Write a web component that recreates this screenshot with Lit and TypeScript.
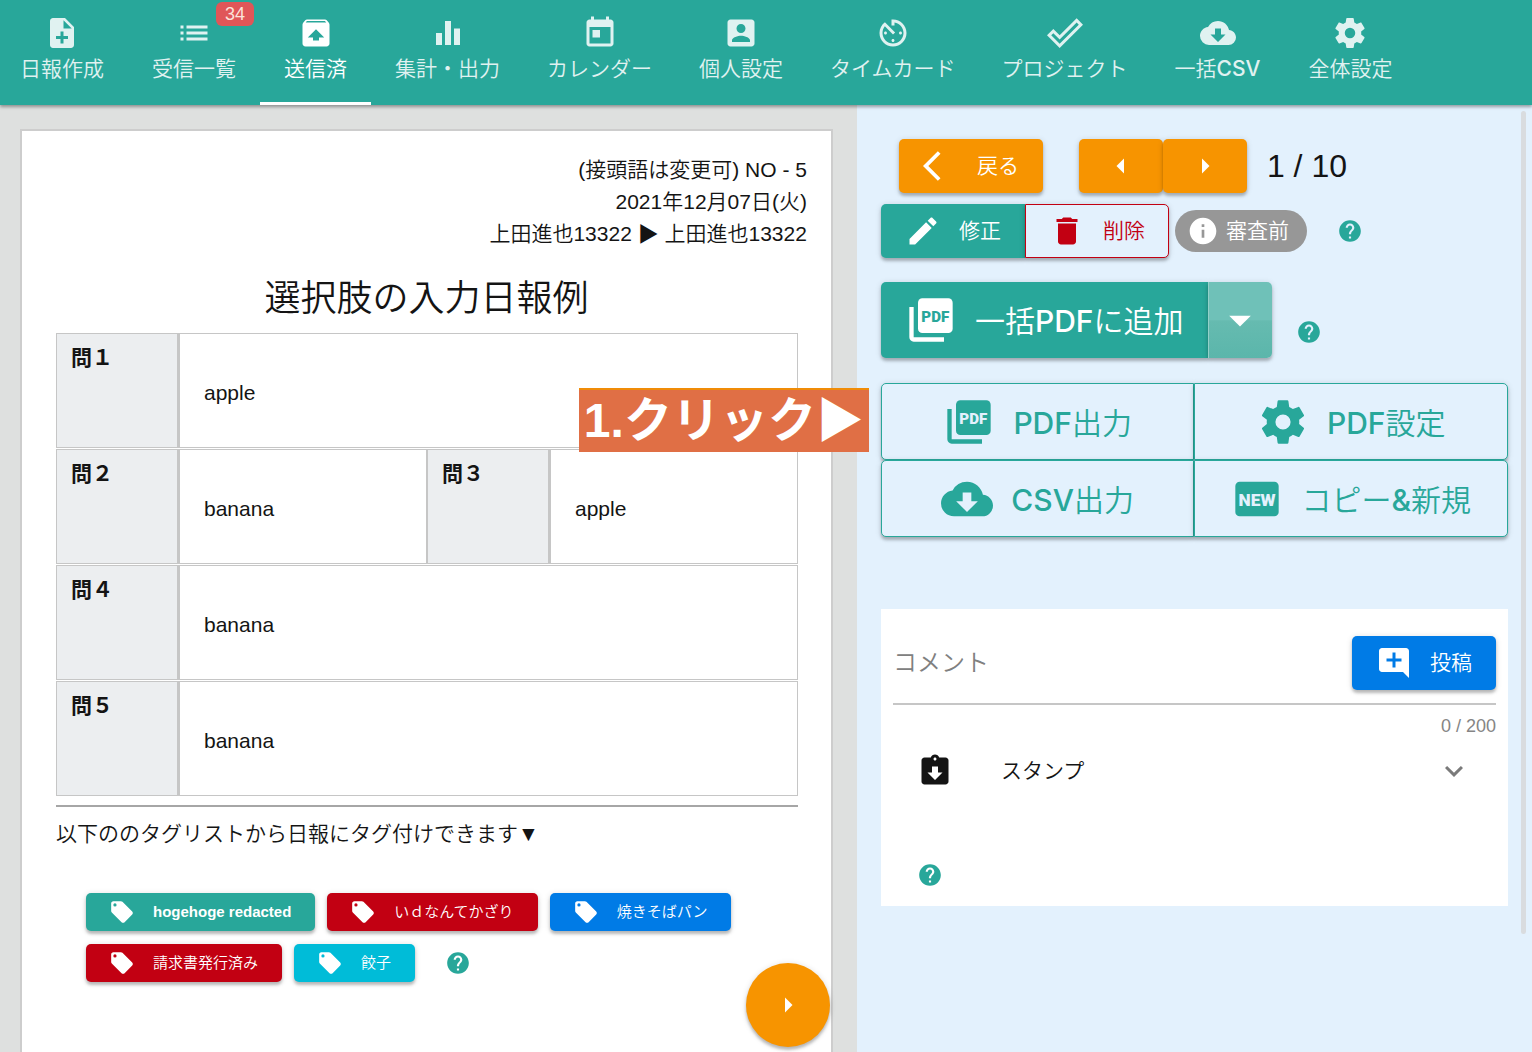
import { LitElement, html, css, svg } from "lit";
import { customElement, property, state } from "lit/decorators.js";
import { classMap } from "lit/directives/class-map.js";

const PATHS: Record<string, string> = {
  noteAdd:
    "M14 2H6c-1.1 0-2 .9-2 2v16c0 1.1.89 2 1.99 2H18c1.1 0 2-.9 2-2V8l-6-6zm2 14h-3v3h-2v-3H8v-2h3v-3h2v3h3v2zm-3-7V3.5L18.5 9H13z",
  list: "M3 13h2v-2H3v2zm0 4h2v-2H3v2zm0-8h2V7H3v2zm4 4h14v-2H7v2zm0 4h14v-2H7v2zM7 7v2h14V7H7z",
  sent: "M20.55 5.22l-1.39-1.68C18.88 3.21 18.47 3 18 3H6c-.47 0-.88.21-1.15.55L3.46 5.22C3.17 5.57 3 6.01 3 6.5V19c0 1.1.89 2 2 2h14c1.1 0 2-.9 2-2V6.5c0-.49-.17-.93-.45-1.28zM12 9.5l5.5 5.5H14v2h-4v-2H6.5L12 9.5zM5.12 5l.82-1h12l.93 1H5.12z",
  chart: "M10 20h4V4h-4v16zm-6 0h4v-8H4v8zM16 9v11h4V9h-4z",
  calendar:
    "M19 3h-1V1h-2v2H8V1H6v2H5c-1.11 0-1.99.9-1.99 2L3 19c0 1.1.89 2 2 2h14c1.1 0 2-.9 2-2V5c0-1.1-.9-2-2-2zm0 16H5V8h14v11zM7 10h5v5H7z",
  account:
    "M3 5v14c0 1.1.89 2 2 2h14c1.1 0 2-.9 2-2V5c0-1.1-.9-2-2-2H5c-1.11 0-2 .9-2 2zm12 4c0 1.66-1.34 3-3 3s-3-1.34-3-3 1.34-3 3-3 3 1.34 3 3zm-9 8c0-2 4-3.1 6-3.1s6 1.1 6 3.1v1H6v-1z",
  timer:
    "M11 17c0 .55.45 1 1 1s1-.45 1-1-.45-1-1-1-1 .45-1 1zm0-14v4h2V5.08c3.39.49 6 3.39 6 6.92 0 3.87-3.13 7-7 7s-7-3.13-7-7c0-1.68.59-3.22 1.58-4.42L12 13l1.41-1.41-6.8-6.8v.02C4.42 6.45 3 9.05 3 12c0 4.97 4.02 9 9 9 4.97 0 9-4.03 9-9s-4.03-9-9-9h-1zm7 9c0-.55-.45-1-1-1s-1 .45-1 1 .45 1 1 1 1-.45 1-1zM6 12c0 .55.45 1 1 1s1-.45 1-1-.45-1-1-1-1 .45-1 1z",
  check:
    "M19.78 2.2L24 6.42L8.44 22L0 13.55L4.22 9.33L8.44 13.55L19.78 2.2M19.78 5L8.44 16.36L4.22 12.19L2.81 13.55L8.44 19.17L21.19 6.42L19.78 5Z",
  cloud:
    "M17 13L12 18L7 13H10V9H14V13M19.35 10.03C18.67 6.59 15.64 4 12 4A7.5 7.5 0 0 0 5.35 8.04C2.34 8.36 0 10.91 0 14A6 6 0 0 0 6 20H19A5 5 0 0 0 24 15C24 12.36 21.95 10.22 19.35 10.03Z",
  cog: "M12 15.5A3.5 3.5 0 0 1 8.5 12A3.5 3.5 0 0 1 12 8.5A3.5 3.5 0 0 1 15.5 12A3.5 3.5 0 0 1 12 15.5M19.43 12.97C19.47 12.65 19.5 12.33 19.5 12C19.5 11.67 19.47 11.34 19.43 11L21.54 9.37C21.73 9.22 21.78 8.95 21.66 8.73L19.66 5.27C19.54 5.05 19.27 4.96 19.05 5.05L16.56 6.05C16.04 5.66 15.5 5.32 14.87 5.07L14.5 2.42C14.46 2.18 14.25 2 14 2H10C9.75 2 9.54 2.18 9.5 2.42L9.13 5.07C8.5 5.32 7.96 5.66 7.44 6.05L4.95 5.05C4.73 4.96 4.46 5.05 4.34 5.27L2.34 8.73C2.21 8.95 2.27 9.22 2.46 9.37L4.57 11C4.53 11.34 4.5 11.67 4.5 12C4.5 12.33 4.53 12.65 4.57 12.97L2.46 14.63C2.27 14.78 2.21 15.05 2.34 15.27L4.34 18.73C4.46 18.95 4.73 19.03 4.95 18.95L7.44 17.94C7.96 18.34 8.5 18.68 9.13 18.93L9.5 21.58C9.54 21.82 9.75 22 10 22H14C14.25 22 14.46 21.82 14.5 21.58L14.87 18.93C15.5 18.67 16.04 18.34 16.56 17.94L19.05 18.95C19.27 19.03 19.54 18.95 19.66 18.73L21.66 15.27C21.78 15.05 21.73 14.78 21.54 14.63L19.43 12.97Z",
  back: "M11.67 3.87L9.9 2.1 0 12l9.9 9.9 1.77-1.77L3.54 12z",
  left: "M14 7l-5 5 5 5V7z",
  right: "M10 17l5-5-5-5v10z",
  down: "M7 10l5 5 5-5z",
  expand: "M16.59 8.59L12 13.17 7.41 8.59 6 10l6 6 6-6z",
  edit: "M3 17.25V21h3.75L17.81 9.94l-3.75-3.75L3 17.25zM20.71 7.04c.39-.39.39-1.02 0-1.41l-2.34-2.34c-.39-.39-1.02-.39-1.41 0l-1.83 1.83 3.75 3.75 1.83-1.83z",
  trash: "M6 19c0 1.1.9 2 2 2h8c1.1 0 2-.9 2-2V7H6v12zM19 4h-3.5l-1-1h-5l-1 1H5v2h14V4z",
  info: "M12 2C6.48 2 2 6.48 2 12s4.48 10 10 10 10-4.48 10-10S17.52 2 12 2zm1 15h-2v-6h2v6zm0-8h-2V7h2v2z",
  help: "M12 2C6.48 2 2 6.48 2 12s4.48 10 10 10 10-4.48 10-10S17.52 2 12 2zm1 17h-2v-2h2v2zm2.07-7.75l-.9.92C13.45 12.9 13 13.5 13 15h-2v-.5c0-1.1.45-2.1 1.17-2.83l1.24-1.26c.37-.36.59-.86.59-1.41 0-1.1-.9-2-2-2s-2 .9-2 2H8c0-2.21 1.79-4 4-4s4 1.79 4 4c0 .88-.36 1.68-.93 2.25z",
  comment:
    "M21.99 4c0-1.1-.89-2-1.99-2H4c-1.1 0-2 .9-2 2v12c0 1.1.9 2 2 2h14l4 4-.01-18zM17 11h-4v4h-2v-4H7V9h4V5h2v4h4v2z",
  stamp:
    "M19 3h-4.18C14.4 1.84 13.3 1 12 1c-1.3 0-2.4.84-2.82 2H5c-1.1 0-2 .9-2 2v14c0 1.1.9 2 2 2h14c1.1 0 2-.9 2-2V5c0-1.1-.9-2-2-2zm-7 0c.55 0 1 .45 1 1s-.45 1-1 1-1-.45-1-1 .45-1 1-1zm0 15l-5-5h3V9h4v4h3l-5 5z",
  tag: "M5.5 7A1.5 1.5 0 0 1 4 5.5A1.5 1.5 0 0 1 5.5 4A1.5 1.5 0 0 1 7 5.5A1.5 1.5 0 0 1 5.5 7M21.41 11.58L12.41 2.58C12.05 2.22 11.55 2 11 2H4C2.89 2 2 2.89 2 4V11C2 11.55 2.22 12.05 2.59 12.41L11.58 21.41C11.95 21.77 12.45 22 13 22C13.55 22 14.05 21.77 14.41 21.41L21.41 14.41C21.78 14.05 22 13.55 22 13C22 12.44 21.77 11.94 21.41 11.58Z",
};

@customElement("ui-icon")
class UiIcon extends LitElement {
  @property() name = "";

  static styles = css`
    :host {
      display: block;
      flex: none;
      width: 36px;
      height: 36px;
    }
    .glyph {
      display: block;
      width: 100%;
      height: 100%;
      fill: currentColor;
    }
    .word {
      fill: var(--cut, #fff);
      font-family: Roboto, sans-serif;
      font-weight: 900;
      text-anchor: middle;
    }
    .narrow {
      font-size: 7px;
    }
    .wide {
      font-size: 8px;
    }
  `;

  private shape() {
    if (this.name === "pdf") {
      return svg`
        <path d="M4 6H2v14c0 1.1.9 2 2 2h14v-2H4z" />
        <rect x="6" y="2" width="16" height="16" rx="2" />
        <text class="word narrow" x="14" y="13">PDF</text>`;
    }
    if (this.name === "new") {
      return svg`
        <rect x="2" y="4" width="20" height="16" rx="2" />
        <text class="word wide" x="12" y="15">NEW</text>`;
    }
    return svg`<path fill-rule="evenodd" d=${PATHS[this.name] ?? ""} />`;
  }

  render() {
    return html`<svg class="glyph" viewBox="0 0 24 24" aria-hidden="true">${this.shape()}</svg>`;
  }
}

interface Tab {
  icon: string;
  label: string;
  kana?: boolean;
  active?: boolean;
  badge?: number;
}

interface Tag {
  label: string;
  tone: string;
  latin?: boolean;
}

const TABS: Tab[] = [
  { icon: "noteAdd", label: "日報作成" },
  { icon: "list", label: "受信一覧", badge: 34 },
  { icon: "sent", label: "送信済", active: true },
  { icon: "chart", label: "集計・出力" },
  { icon: "calendar", label: "カレンダー", kana: true },
  { icon: "account", label: "個人設定" },
  { icon: "timer", label: "タイムカード", kana: true },
  { icon: "check", label: "プロジェクト", kana: true },
  { icon: "cloud", label: "一括CSV" },
  { icon: "cog", label: "全体設定" },
];

const TAGS: Tag[] = [
  { label: "hogehoge redacted", tone: "teal", latin: true },
  { label: "いｄなんてかざり", tone: "red" },
  { label: "焼きそばパン", tone: "blue" },
  { label: "請求書発行済み", tone: "red" },
  { label: "餃子", tone: "cyan" },
];

const EXPORTS = [
  { icon: "pdf", label: "PDF出力" },
  { icon: "cog", label: "PDF設定" },
  { icon: "cloud", label: "CSV出力" },
  { icon: "new", label: "コピー&新規" },
];

@customElement("app-root")
class AppRoot extends LitElement {
  @state() private comment = "";
  @state() private stampOpen = false;

  static styles = css`
    :host {
      --teal: #28a79a;
      --orange: #f79400;
      --red: #c20012;
      --blue: #007be6;
      --cyan: #00bcd8;
      --sky: #e3f1fd;
      --lift: 0 3px 3px rgba(0, 0, 0, 0.22), 0 1px 6px rgba(0, 0, 0, 0.14);
      --medium: Inter, "Noto Sans CJK JP DemiLight", "Noto Sans CJK JP Light", "Noto Sans CJK JP", sans-serif;
      display: flex;
      flex-direction: column;
      height: 100vh;
      overflow: hidden;
      font-family: "Liberation Sans", "Noto Sans CJK JP DemiLight", "Noto Sans CJK JP Light", "Noto Sans CJK JP",
        sans-serif;
      font-size: 21px;
      line-height: 32px;
      color: #141414;
    }
    * {
      box-sizing: border-box;
    }
    button,
    input {
      font: inherit;
      color: inherit;
      border: 0;
      margin: 0;
      padding: 0;
      background: none;
    }
    button {
      cursor: pointer;
    }

    .bar {
      position: relative;
      z-index: 2;
      display: flex;
      flex: none;
      height: 105px;
      background: var(--teal);
      box-shadow: 0 2px 3px rgba(0, 0, 0, 0.35);
    }
    .tabs {
      display: flex;
      margin-left: -4px;
    }
    .tab {
      position: relative;
      display: flex;
      flex-direction: column;
      align-items: center;
      gap: 2px;
      padding: 15px 24px 0;
      white-space: nowrap;
      text-decoration: none;
      color: #e0f2f1;
      font-family: var(--medium);
      font-weight: 500;
    }
    .kana {
      padding-left: 23px;
      padding-right: 23px;
    }
    .active {
      color: #fff;
      box-shadow: inset 0 -3px #fff;
    }
    .badge {
      position: absolute;
      top: 2px;
      right: 6px;
      padding: 0 9px;
      border-radius: 6px;
      background: #e05658;
      color: #fbe3da;
      font-family: "Liberation Sans", sans-serif;
      font-size: 18px;
      font-weight: 400;
      line-height: 24px;
    }

    .body {
      display: flex;
      flex: 1;
      min-height: 0;
    }
    .left {
      position: relative;
      flex: 0 0 calc(56% - 1px);
      display: flex;
      padding: 24px 24px 0 20px;
      background: #dee0df;
    }
    .paper {
      flex: 1;
      border: 2px solid #cdcdcd;
      border-bottom: 0;
      background: #fff;
      padding: 23px 24px 0 34px;
    }
    .meta {
      margin: 0;
      text-align: right;
    }
    .title {
      margin: 25px 10px 9px 0;
      font-size: 36px;
      font-weight: 400;
      line-height: 48px;
      text-align: center;
    }
    .sheet {
      margin-right: 9px;
    }
    .answers {
      width: 100%;
      table-layout: fixed;
      border-collapse: separate;
      border-spacing: 0 1px;
    }
    .question,
    .answer {
      height: 115px;
      border: 1px solid #c6c6c6;
      text-align: left;
    }
    .question {
      width: 123px;
      padding: 8px 14px;
      border-right-width: 2px;
      background: #eceef0;
      font-family: "Liberation Sans", "Noto Sans CJK JP", sans-serif;
      font-weight: 700;
      vertical-align: top;
    }
    .answer {
      padding: 4px 24px 0;
      vertical-align: middle;
    }
    .rule {
      height: 2px;
      margin: 8px 0 11px;
      border: 0;
      background: #a6a6a6;
    }
    .hint {
      margin: 0;
    }
    .tags {
      display: flex;
      flex-wrap: wrap;
      gap: 13px 12px;
      margin: 43px 30px 0;
    }
    .tag {
      display: flex;
      align-items: center;
      gap: 18px;
      height: 38px;
      padding: 0 24px 0 23px;
      border-radius: 5px;
      color: #fff;
      font-size: 15px;
      box-shadow: var(--lift);
    }
    .latin {
      font-weight: 700;
    }
    .small {
      width: 26px;
      height: 26px;
    }
    .teal {
      background: var(--teal);
    }
    .red {
      background: var(--red);
    }
    .blue {
      background: var(--blue);
    }
    .cyan {
      background: var(--cyan);
    }
    .help {
      display: block;
      color: var(--teal);
    }
    .tags .help {
      align-self: center;
      margin-left: 18px;
    }
    .fab {
      position: absolute;
      right: 27px;
      bottom: 5px;
      display: grid;
      place-items: center;
      width: 84px;
      height: 84px;
      border-radius: 50%;
      background: var(--orange);
      color: #fff;
      box-shadow: var(--lift);
    }
    .callout {
      position: absolute;
      z-index: 1;
      top: 283px;
      right: -12px;
      padding: 0 5px;
      border-top: 2px solid #f08c08;
      background: #e06f45;
      color: #fff;
      font-family: "Liberation Sans", "Noto Sans CJK JP", sans-serif;
      font-size: 48px;
      font-weight: 700;
      line-height: 62px;
      white-space: nowrap;
    }

    .right {
      position: relative;
      flex: 1;
      min-width: 0;
      padding: 34px 24px 0;
      background: var(--sky);
    }
    .scroll {
      position: absolute;
      top: 6px;
      right: 6px;
      bottom: 118px;
      width: 5px;
      border-radius: 3px;
      background: #d9dcdf;
    }
    .row {
      display: flex;
      align-items: center;
    }
    .btn {
      display: flex;
      flex: none;
      align-items: center;
      justify-content: center;
      gap: 18px;
      height: 54px;
      padding: 0 24px;
      border-radius: 5px;
      color: #fff;
      font-family: var(--medium);
      font-weight: 500;
      white-space: nowrap;
      box-shadow: var(--lift);
    }
    .orange {
      background: var(--orange);
    }
    .pager {
      display: flex;
      margin: 0 20px 0 36px;
    }
    .first {
      margin-left: 18px;
    }
    .count {
      font-size: 32px;
    }
    .actions {
      margin-top: 11px;
    }
    .edit {
      border-radius: 5px 0 0 5px;
    }
    .remove {
      border: 1px solid var(--red);
      padding: 0 23px;
      border-radius: 0 5px 5px 0;
      background: var(--sky);
      color: var(--red);
    }
    .chip {
      display: flex;
      align-items: center;
      gap: 7px;
      height: 42px;
      margin-left: 6px;
      padding: 0 18px 0 12px;
      border-radius: 21px;
      background: #979797;
      color: #fff;
    }
    .chip ui-icon {
      width: 32px;
      height: 32px;
    }
    .actions .help {
      margin-left: 30px;
    }
    .bulk {
      margin-top: 24px;
    }
    .large {
      height: 76px;
      font-size: 30px;
    }
    .large ui-icon {
      width: 52px;
      height: 52px;
    }
    .caption {
      padding-top: 2px;
    }
    .bulk .large {
      --cut: var(--teal);
      border-radius: 5px 0 0 5px;
    }
    .bulk .more {
      padding: 0 6px 0 5px;
      border-left: 1px solid #93d0c9;
      border-radius: 0 5px 5px 0;
      background: linear-gradient(#6fc1b8 50%, #66bbb0 51%, #5bb6ab);
    }
    .bulk .help {
      align-self: flex-end;
      margin: 0 0 13px 24px;
    }
    .exports {
      display: grid;
      grid-template-columns: 1fr 1fr;
      margin-top: 25px;
    }
    .export {
      --cut: var(--sky);
      height: 77px;
      border: 1px solid var(--teal);
      background: var(--sky);
      color: var(--teal);
    }
    .export:nth-child(odd) {
      border-radius: 5px 0 0 5px;
    }
    .export:nth-child(even) {
      border-radius: 0 5px 5px 0;
    }
    .card {
      margin-top: 72px;
      padding: 27px 12px 18px;
      background: #fff;
    }
    .field {
      display: flex;
      padding-bottom: 13px;
      border-bottom: 2px solid #c6c6c6;
    }
    .input {
      flex: 1;
      min-width: 0;
      outline: 0;
      font-size: 24px;
    }
    .input::placeholder {
      color: #808080;
      opacity: 1;
    }
    .counter {
      margin: 9px 0 0;
      color: #858585;
      font-size: 18px;
      line-height: 24px;
      text-align: right;
    }
    .stamp {
      display: flex;
      align-items: center;
      width: 100%;
      height: 66px;
      padding: 0 24px;
      text-align: left;
    }
    .stamp-label {
      flex: 1;
      padding-left: 48px;
    }
    .chevron {
      color: #7a7a7a;
    }
    .open {
      rotate: 180deg;
    }
    .card .help {
      margin: 58px 0 0 24px;
    }
  `;

  private help() {
    return html`<button class="help small" aria-label="ヘルプ"><ui-icon class="small" name="help"></ui-icon></button>`;
  }

  private question(label: string, answer: string, span = 3) {
    return html`<th class="question" scope="row">${label}</th>
      <td class="answer" colspan=${span}>${answer}</td>`;
  }

  render() {
    return html`
      <header class="bar">
        <nav class="tabs">
          ${TABS.map(
            (t) => html`<a
              class=${classMap({ tab: true, kana: !!t.kana, active: !!t.active })}
              href="#"
              ><ui-icon name=${t.icon}></ui-icon><span>${t.label}</span>${t.badge
                ? html`<span class="badge">${t.badge}</span>`
                : ""}</a
            >`
          )}
        </nav>
      </header>
      <div class="body">
        <main class="left">
          <article class="paper">
            <p class="meta">(接頭語は変更可) NO - 5</p>
            <p class="meta">2021年12月07日(火)</p>
            <p class="meta">上田進也13322 ▶ 上田進也13322</p>
            <h1 class="title">選択肢の入力日報例</h1>
            <div class="sheet">
              <table class="answers">
                <colgroup>
                  <col width="123" />
                  <col />
                  <col width="123" />
                  <col />
                </colgroup>
                <tbody>
                  <tr>${this.question("問１", "apple")}</tr>
                  <tr>${this.question("問２", "banana", 1)}${this.question("問３", "apple", 1)}</tr>
                  <tr>${this.question("問４", "banana")}</tr>
                  <tr>${this.question("問５", "banana")}</tr>
                </tbody>
              </table>
              <hr class="rule" />
              <p class="hint">以下ののタグリストから日報にタグ付けできます▼</p>
              <div class="tags">
                ${TAGS.map(
                  (t) => html`<button class=${classMap({ tag: true, [t.tone]: true, latin: !!t.latin })}>
                    <ui-icon class="small" name="tag"></ui-icon>${t.label}
                  </button>`
                )}
                ${this.help()}
              </div>
            </div>
          </article>
          <div class="callout">1.クリック▶</div>
          <button class="fab" aria-label="次へ"><ui-icon name="right"></ui-icon></button>
        </main>
        <aside class="right">
          <div class="row">
            <button class="btn orange first"><ui-icon name="back"></ui-icon>戻る</button>
            <div class="pager">
              <button class="btn orange" aria-label="前へ"><ui-icon name="left"></ui-icon></button>
              <button class="btn orange" aria-label="次へ"><ui-icon name="right"></ui-icon></button>
            </div>
            <span class="count">1 / 10</span>
          </div>
          <div class="row actions">
            <button class="btn teal edit"><ui-icon name="edit"></ui-icon>修正</button>
            <button class="btn remove"><ui-icon name="trash"></ui-icon>削除</button>
            <span class="chip"><ui-icon name="info"></ui-icon>審査前</span>
            ${this.help()}
          </div>
          <div class="row bulk">
            <button class="btn teal large">
              <ui-icon name="pdf"></ui-icon><span class="caption">一括PDFに追加</span>
            </button>
            <button class="btn large more" aria-label="その他"><ui-icon name="down"></ui-icon></button>
            ${this.help()}
          </div>
          <div class="exports">
            ${EXPORTS.map(
              (e) => html`<button class="btn large export">
                <ui-icon name=${e.icon}></ui-icon><span class="caption">${e.label}</span>
              </button>`
            )}
          </div>
          <section class="card">
            <div class="field">
              <input
                class="input"
                aria-label="コメント"
                placeholder="コメント"
                maxlength="200"
                .value=${this.comment}
                @input=${(e: Event) => (this.comment = (e.target as HTMLInputElement).value)}
              />
              <button class="btn blue"><ui-icon name="comment"></ui-icon>投稿</button>
            </div>
            <p class="counter">${this.comment.length} / 200</p>
            <button
              class="stamp"
              aria-expanded=${this.stampOpen}
              @click=${() => (this.stampOpen = !this.stampOpen)}
            >
              <ui-icon name="stamp"></ui-icon>
              <span class="stamp-label">スタンプ</span>
              <ui-icon class=${classMap({ chevron: true, open: this.stampOpen })} name="expand"></ui-icon>
            </button>
            ${this.help()}
          </section>
          <div class="scroll"></div>
        </aside>
      </div>
    `;
  }
}
